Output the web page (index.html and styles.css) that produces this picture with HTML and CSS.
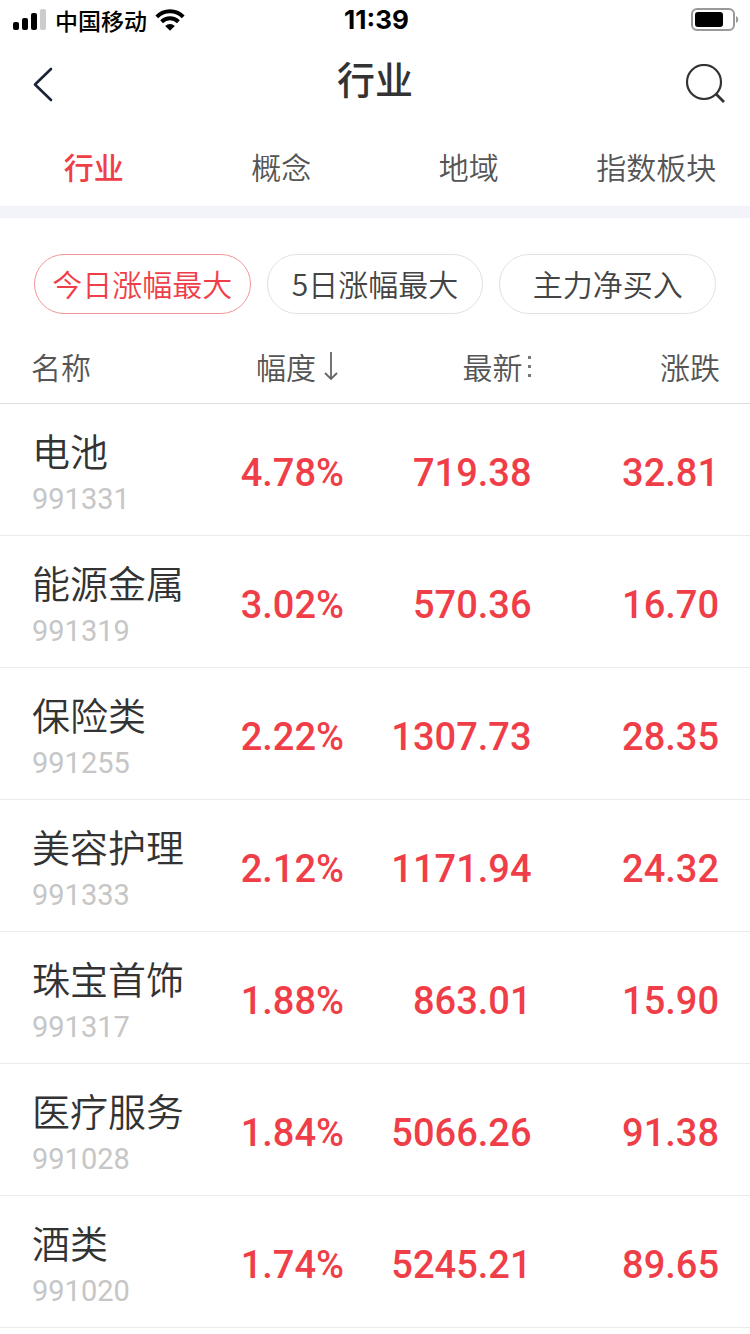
FILE: index.html
```html
<!DOCTYPE html>
<html lang="zh-CN">
<head>
  <meta charset="utf-8">
  <meta name="viewport" content="width=device-width, initial-scale=1">
  <title>行业</title>
  <link rel="stylesheet" href="styles.css">
</head>
<body>
  <div class="status-bar">
    <div class="status-left">
      <svg class="signal" width="34" height="22" viewBox="0 0 34 22">
        <rect x="0" y="13" width="6" height="8" rx="2"/>
        <rect x="9" y="9" width="6" height="12" rx="2"/>
        <rect x="18" y="4" width="6" height="17" rx="2"/>
        <rect x="27" y="0" width="6" height="21" rx="2" fill="#ccc"/>
      </svg>
      <span class="carrier">中国移动</span>
      <svg class="wifi" width="30" height="22" viewBox="0 0 30 22">
        <path d="M1.800 7.800a18.700 18.700 0 0 1 26.400 0M6.600 12.800a12 12 0 0 1 16.800 0" fill="none" stroke="#000" stroke-width="4"/>
        <path d="M10.200 16.900a6.800 6.800 0 0 1 9.600 0L15 21.800z"/>
      </svg>
    </div>
    <span class="time">11:39</span>
    <div class="status-right">
      <svg width="49" height="24" viewBox="0 0 49 24">
        <rect x="1" y="1" width="42" height="21" rx="5" fill="none" stroke="#999" stroke-width="2"/>
        <rect x="4" y="4" width="28" height="15" rx="3"/>
        <path d="M45 8c3 1.500 3 5.500 0 7z" fill="#999"/>
      </svg>
    </div>
  </div>

  <header class="nav">
    <button class="nav-btn back" type="button" aria-label="返回">
      <svg width="20" height="36" viewBox="0 0 20 36">
        <path d="M18 3L2 18.500L18 34" fill="none" stroke="#1b2338" stroke-width="2.600" stroke-linecap="round" stroke-linejoin="round"/>
      </svg>
    </button>
    <h1>行业</h1>
    <button class="nav-btn search" type="button" aria-label="搜索">
      <svg width="40" height="40" viewBox="0 0 40 40">
        <circle cx="19" cy="18" r="17" fill="none" stroke="#333" stroke-width="2.200"/>
        <path d="M31 30l8 8" stroke="#333" stroke-width="2.600"/>
      </svg>
    </button>
  </header>

  <nav class="tabs">
    <a class="active" href="#industry">行业</a>
    <a href="#concept">概念</a>
    <a href="#region">地域</a>
    <a href="#index">指数板块</a>
  </nav>

  <main>
    <div class="filters">
      <button class="chip active" type="button">今日涨幅最大</button>
      <button class="chip" type="button">5日涨幅最大</button>
      <button class="chip" type="button">主力净买入</button>
    </div>

    <table class="quotes">
      <thead>
        <tr>
          <th>名称</th>
          <th>
            <button class="sort" type="button">幅度
              <svg width="24" height="30" viewBox="0 0 24 30">
                <path d="M10 1v27M4 22l6 6 6-6" fill="none" stroke="#666" stroke-width="1.800"/>
              </svg>
            </button>
          </th>
          <th>
            <button class="sort" type="button">最新
              <svg width="5" height="22" viewBox="0 0 5 22">
                <path d="M0 1h3v3H0zM0 10h3v3H0zM0 19h3v3H0z" fill="#777"/>
              </svg>
            </button>
          </th>
          <th>涨跌</th>
        </tr>
      </thead>
      <tbody>
        <tr>
          <td><div class="name">电池</div><div class="code">991331</div></td>
          <td>4.78%</td><td>719.38</td><td>32.81</td>
        </tr>
        <tr>
          <td><div class="name">能源金属</div><div class="code">991319</div></td>
          <td>3.02%</td><td>570.36</td><td>16.70</td>
        </tr>
        <tr>
          <td><div class="name">保险类</div><div class="code">991255</div></td>
          <td>2.22%</td><td>1307.73</td><td>28.35</td>
        </tr>
        <tr>
          <td><div class="name">美容护理</div><div class="code">991333</div></td>
          <td>2.12%</td><td>1171.94</td><td>24.32</td>
        </tr>
        <tr>
          <td><div class="name">珠宝首饰</div><div class="code">991317</div></td>
          <td>1.88%</td><td>863.01</td><td>15.90</td>
        </tr>
        <tr>
          <td><div class="name">医疗服务</div><div class="code">991028</div></td>
          <td>1.84%</td><td>5066.26</td><td>91.38</td>
        </tr>
        <tr>
          <td><div class="name">酒类</div><div class="code">991020</div></td>
          <td>1.74%</td><td>5245.21</td><td>89.65</td>
        </tr>
      </tbody>
    </table>
  </main>
</body>
</html>
```
FILE: styles.css
```css
* {
  box-sizing: border-box;
}
body {
  margin: 0;
  background: #fff;
  color: #333;
  font-family: "Noto Sans CJK SC", sans-serif;
  font-size: 30px;
  font-weight: 350;
}
button {
  padding: 0;
  border: 0;
  background: none;
  color: inherit;
  font: inherit;
  cursor: pointer;
}
a {
  color: inherit;
  text-decoration: none;
}
svg {
  display: block;
}

/* status bar */
.status-bar {
  display: grid;
  grid-template-columns: 1fr auto 1fr;
  align-items: center;
  height: 40px;
  padding: 0 10px 0 13px;
  color: #000;
}
.status-left {
  display: flex;
  align-items: center;
  gap: 8px;
}
.status-right {
  display: flex;
  justify-content: flex-end;
}
.carrier {
  font-size: 23px;
  font-weight: 500;
  line-height: 40px;
}
.time {
  font-family: Inter, sans-serif;
  font-size: 26px;
  font-weight: 700;
  line-height: 40px;
}

/* title */
.nav {
  display: flex;
  align-items: center;
  justify-content: space-between;
  height: 88px;
  padding: 0 25px;
}
.nav h1 {
  margin: 0;
  padding-bottom: 12px;
  font-size: 38px;
  font-weight: 500;
  line-height: 56px;
}
.nav-btn {
  display: flex;
  width: 40px;
}
.back {
  padding-left: 8px;
}

/* tabs */
.tabs {
  display: flex;
  border-bottom: 12px solid #f3f4f9;
  color: #555;
}
.tabs a {
  flex: 1;
  padding-bottom: 2px;
  text-align: center;
  line-height: 76px;
}
.tabs .active {
  color: #f03e48;
  font-weight: 500;
}

/* filters */
.filters {
  display: flex;
  gap: 16px;
  padding: 36px 34px 0;
}
.chip {
  flex: 1 1 0;
  height: 60px;
  padding-bottom: 2px;
  border: 1px solid #e2e2e2;
  border-radius: 30px;
  color: #444;
  white-space: nowrap;
}
.chip.active {
  border-color: #f5959b;
  color: #f03e48;
}

/* list */
.quotes {
  width: 100%;
  table-layout: fixed;
  border-collapse: separate;
  border-spacing: 0;
}
.quotes th {
  height: 90px;
  padding: 14px 30px 0 0;
  border-bottom: 1px solid #ddd;
  color: #555;
  font-weight: inherit;
  line-height: 40px;
  text-align: right;
}
.quotes th:first-child {
  padding-left: 31px;
  text-align: left;
}
.sort {
  display: inline-flex;
  align-items: center;
  gap: 5px;
  vertical-align: top;
}
.quotes td {
  height: 132px;
  padding: 6px 31px 0 0;
  border-bottom: 1px solid #ebebeb;
  color: #f03e48;
  font-family: Roboto, sans-serif;
  font-size: 38px;
  font-weight: 500;
  text-align: right;
  white-space: nowrap;
}
.quotes td:first-child {
  padding: 0 0 0 32px;
  text-align: left;
}
.name {
  color: #333;
  font-family: "Noto Sans CJK SC", sans-serif;
  font-size: 38px;
  font-weight: 350;
  line-height: 56px;
}
.code {
  padding-top: 3px;
  color: #c6c6c6;
  font-size: 29px;
  font-weight: 400;
  line-height: 36px;
}
```
